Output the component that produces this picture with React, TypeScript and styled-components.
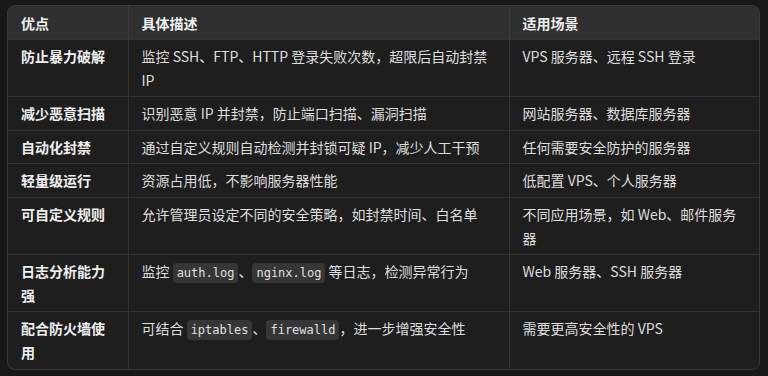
import React from "react";
import styled, { createGlobalStyle } from "styled-components";

const GlobalStyle = createGlobalStyle`
  html, body {
    margin: 0;
    padding: 0;
    background: #181818;
  }
  body {
    font-family: "Noto Sans CJK SC", "Noto Sans", sans-serif;
    color: #e3e3e3;
  }
`;

const Page = styled.div`
  padding: 5px 8px 0 7px;
`;

const TableWrap = styled.div`
  border: 1px solid #383838;
  border-radius: 8px;
  overflow: hidden;
  background: #1e1e1e;
`;

const Table = styled.table`
  width: 100%;
  border-collapse: collapse;
  table-layout: fixed;
  font-size: 14px;
  line-height: 24px;
`;

const Th = styled.th`
  background: #2f2f2f;
  color: #f0f0f0;
  font-weight: 700;
  text-align: left;
  padding: 5px 13px 4px;
  border-left: 1px solid #3c3c3c;
  &:first-child {
    border-left: none;
  }
`;

const Td = styled.td<{ $bold?: boolean }>`
  vertical-align: top;
  padding: 4px 13px 4.4px;
  font-weight: ${(p) => (p.$bold ? 700 : 400)};
  color: ${(p) => (p.$bold ? "#f0f0f0" : "#dedede")};
  border-top: 1px solid #333333;
  border-left: 1px solid #333333;
  &:first-child {
    border-left: none;
  }
`;

const Code = styled.code`
  font-family: "DejaVu Sans Mono", "Liberation Mono", monospace;
  font-size: 12px;
  line-height: 1;
  background: #363636;
  color: #e0e0e0;
  border-radius: 4px;
  padding: 3px 4px;
`;

type Row = {
  name: string;
  desc: React.ReactNode;
  scene: string;
};

const rows: Row[] = [
  {
    name: "防止暴力破解",
    desc: "监控 SSH、FTP、HTTP 登录失败次数，超限后自动封禁 IP",
    scene: "VPS 服务器、远程 SSH 登录",
  },
  {
    name: "减少恶意扫描",
    desc: "识别恶意 IP 并封禁，防止端口扫描、漏洞扫描",
    scene: "网站服务器、数据库服务器",
  },
  {
    name: "自动化封禁",
    desc: "通过自定义规则自动检测并封锁可疑 IP，减少人工干预",
    scene: "任何需要安全防护的服务器",
  },
  {
    name: "轻量级运行",
    desc: "资源占用低，不影响服务器性能",
    scene: "低配置 VPS、个人服务器",
  },
  {
    name: "可自定义规则",
    desc: "允许管理员设定不同的安全策略，如封禁时间、白名单",
    scene: "不同应用场景，如 Web、邮件服务器",
  },
  {
    name: "日志分析能力强",
    desc: (
      <>
        监控 <Code>auth.log</Code>、<Code>nginx.log</Code> 等日志，检测异常行为
      </>
    ),
    scene: "Web 服务器、SSH 服务器",
  },
  {
    name: "配合防火墙使用",
    desc: (
      <>
        可结合 <Code>iptables</Code>、<Code>firewalld</Code>，进一步增强安全性
      </>
    ),
    scene: "需要更高安全性的 VPS",
  },
];

export default function App() {
  return (
    <>
      <GlobalStyle />
      <Page>
        <TableWrap>
          <Table>
            <colgroup>
              <col style={{ width: 120 }} />
              <col style={{ width: 381 }} />
              <col />
            </colgroup>
            <thead>
              <tr>
                <Th>优点</Th>
                <Th>具体描述</Th>
                <Th>适用场景</Th>
              </tr>
            </thead>
            <tbody>
              {rows.map((r) => (
                <tr key={r.name}>
                  <Td $bold>{r.name}</Td>
                  <Td>{r.desc}</Td>
                  <Td>{r.scene}</Td>
                </tr>
              ))}
            </tbody>
          </Table>
        </TableWrap>
      </Page>
    </>
  );
}
